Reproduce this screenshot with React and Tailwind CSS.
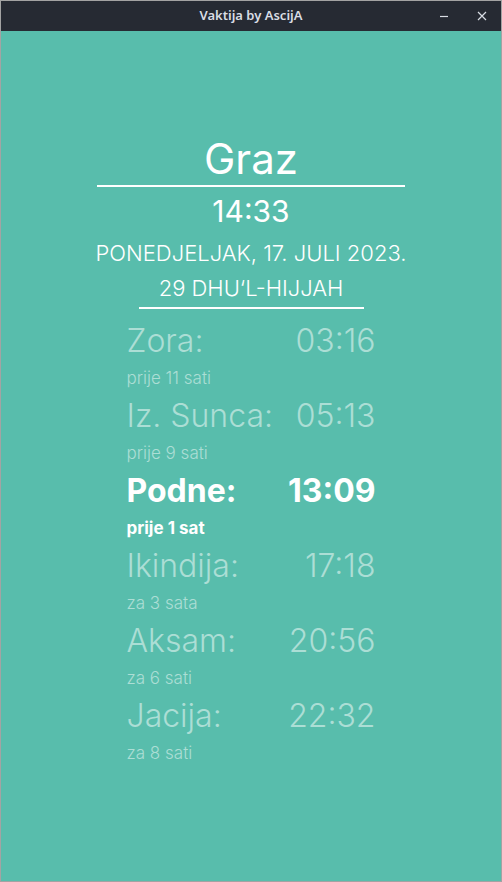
const prayers = [
  { name: "Zora:", time: "03:16", rel: "prije 11 sati" },
  { name: "Iz. Sunca:", time: "05:13", rel: "prije 9 sati" },
  { name: "Podne:", time: "13:09", rel: "prije 1 sat", active: true },
  { name: "Ikindija:", time: "17:18", rel: "za 3 sata" },
  { name: "Aksam:", time: "20:56", rel: "za 6 sati" },
  { name: "Jacija:", time: "22:32", rel: "za 8 sati" },
]

function TitleBar() {
  return (
    <div className="relative flex h-[30px] items-center justify-center bg-[#262a33]">
      <span className="font-['Noto_Sans',sans-serif] text-[13px] font-semibold text-[#d9dde4]">
        Vaktija by AscijA
      </span>
      <div className="absolute right-0 top-0 flex h-full items-center">
        <button className="flex h-full w-[38px] items-center justify-center">
          <svg width="10" height="10" viewBox="0 0 10 10">
            <path d="M1 5.5h8" stroke="#d9dde4" strokeWidth="1.2" />
          </svg>
        </button>
        <button className="flex h-full w-[38px] items-center justify-center">
          <svg width="10" height="10" viewBox="0 0 10 10">
            <path d="M1 1l8 8M9 1l-8 8" stroke="#d9dde4" strokeWidth="1.2" />
          </svg>
        </button>
      </div>
    </div>
  )
}

function PrayerRow({ name, time, rel, active }) {
  const color = active ? "text-white font-bold" : "text-[#acded5] font-light"
  return (
    <div className={color}>
      <div className="flex h-[42px] items-end justify-between text-[32px] leading-[40px]">
        <span>{name}</span>
        <span>{time}</span>
      </div>
      <div className={"h-[33px] pt-[7px] text-[17px] leading-[20px] " + (active ? "font-bold" : "font-light")}>
        {rel}
      </div>
    </div>
  )
}

export default function App() {
  return (
    <div className="flex h-[882px] w-[502px] flex-col border border-[#a3a3a3] bg-[#58bdac] font-['Inter',sans-serif]">
      <TitleBar />
      <div className="flex flex-col items-center pt-[103px] text-white">
        <div className="text-[42px] leading-[50px]">Graz</div>
        <div className="mt-[1px] h-[2px] w-[308px] bg-white" />
        <div className="mt-[6px] text-[30px] leading-[36px]">14:33</div>
        <div className="mt-[7px] text-[22px] font-light leading-[35px]">PONEDJELJAK, 17. JULI 2023.</div>
        <div className="text-[22px] font-light leading-[35px]">29 DHU‘L-HIJJAH</div>
        <div className="mt-[1px] h-[2px] w-[225px] bg-white" />
        <div className="mt-[10px] w-[249px]">
          {prayers.map((p) => (
            <PrayerRow key={p.name} {...p} />
          ))}
        </div>
      </div>
    </div>
  )
}
